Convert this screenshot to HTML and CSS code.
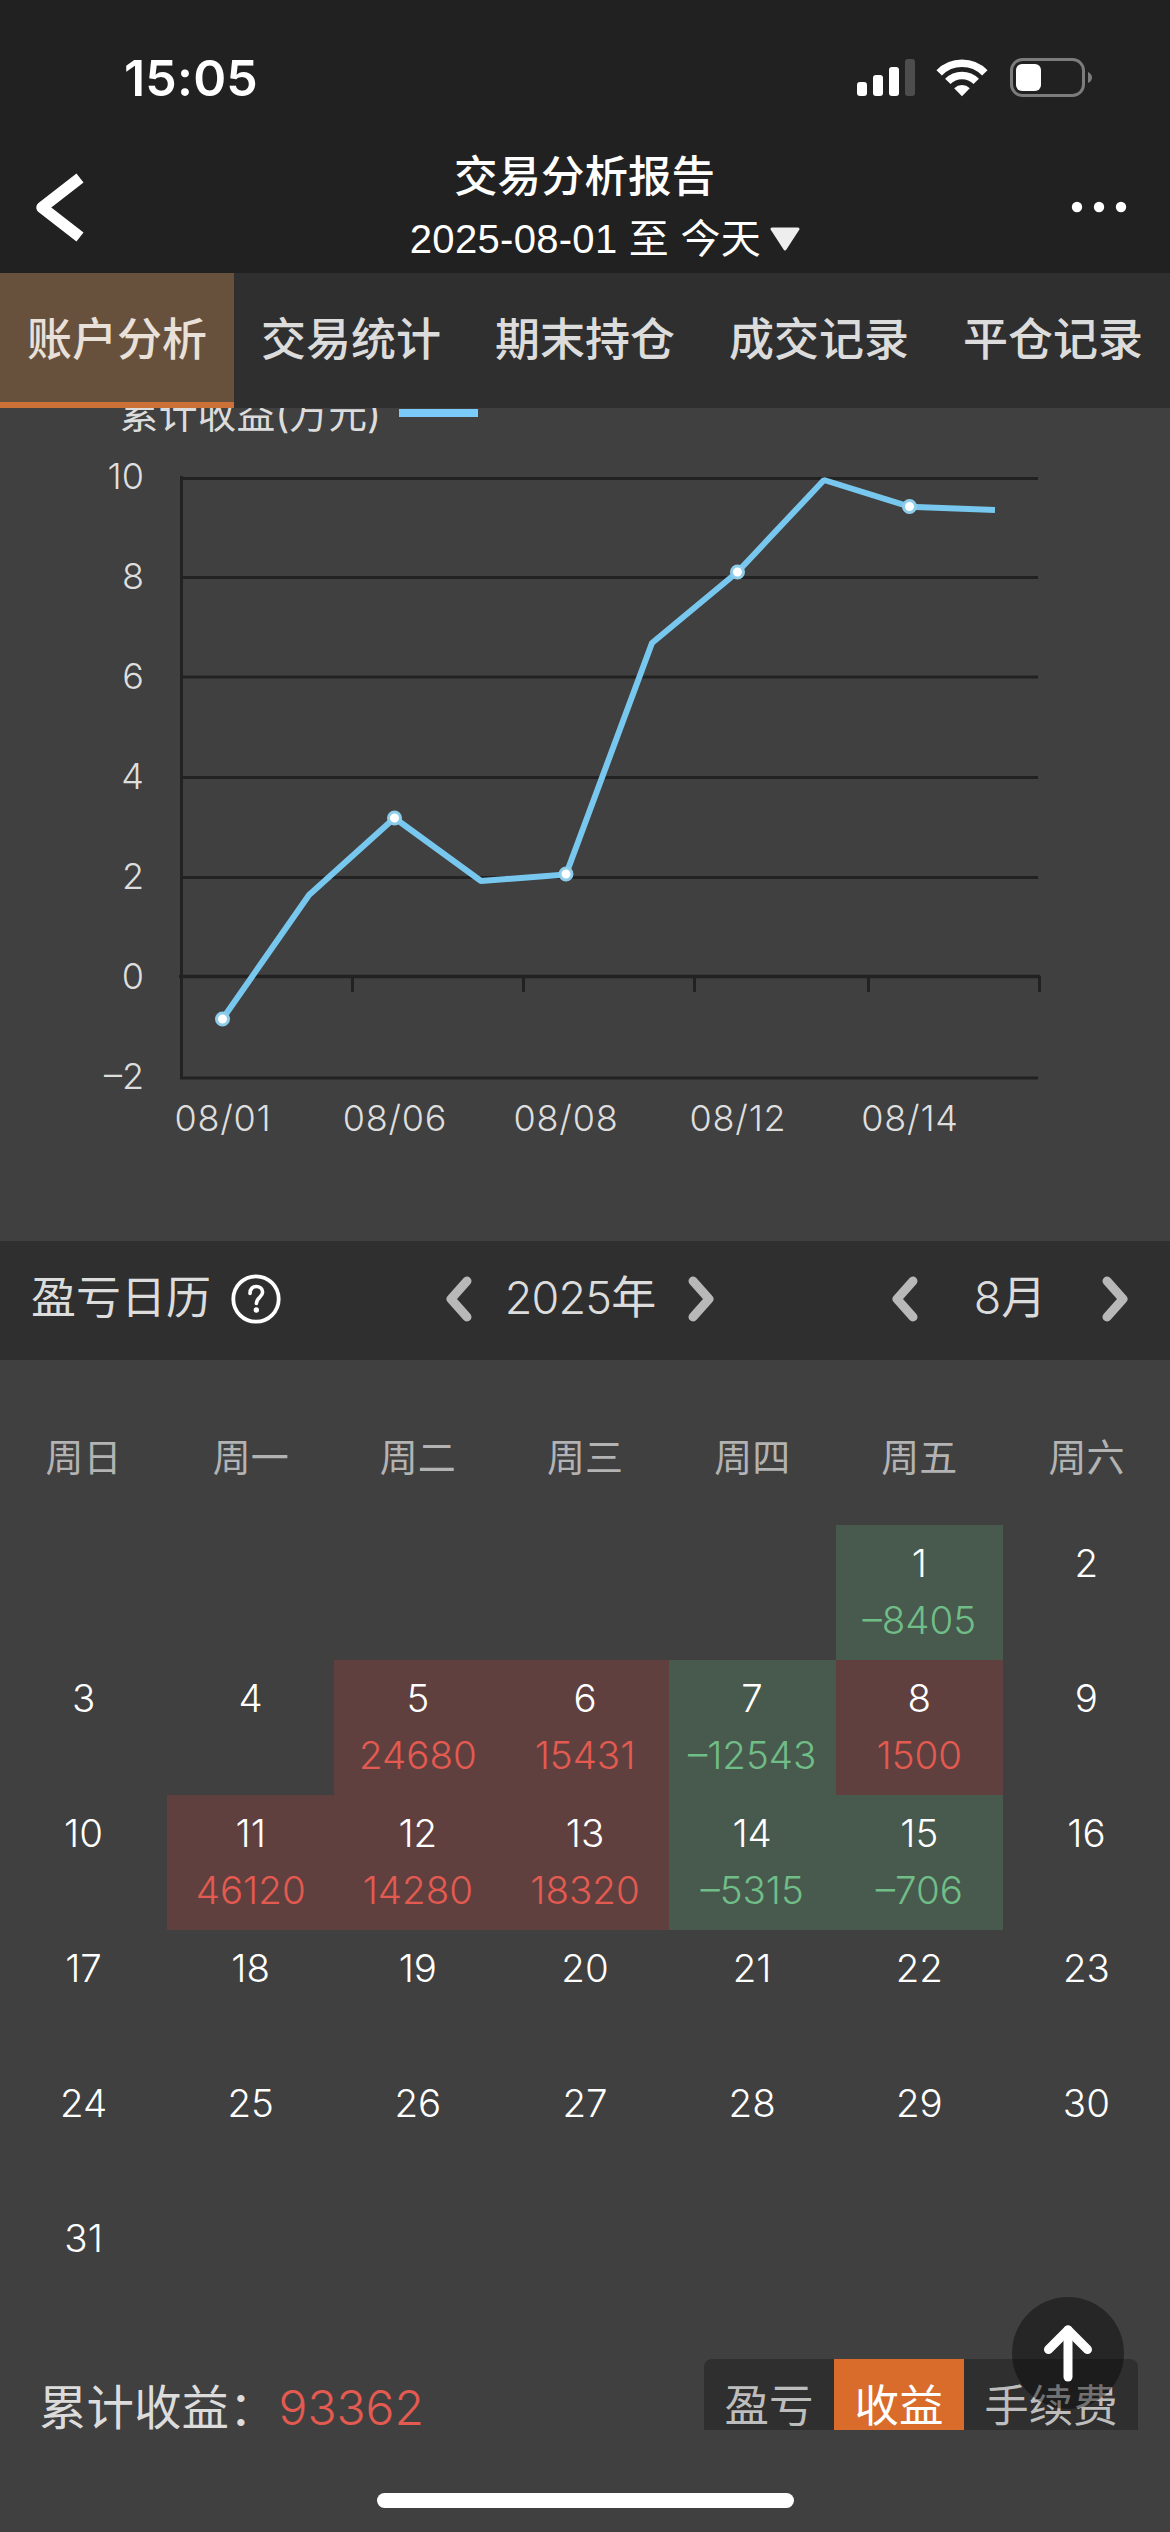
FILE: index.html
```html
<!DOCTYPE html>
<html lang="zh-CN">
<head>
<meta charset="utf-8">
<title>交易分析报告</title>
<link rel="stylesheet" href="styles.css">
</head>
<body>
<div class="screen">
  <header class="header">
    <div class="status">
      <span class="time">15:05</span>
      <div class="indicators">
        <svg width="58" height="40" viewBox="0 0 58 40"><g fill="#fff"><rect y="24" width="10" height="14" rx="3"/><rect x="16" y="17" width="10" height="21" rx="3"/><rect x="32" y="9" width="10" height="29" rx="3"/></g><rect x="48" y="1" width="10" height="37" rx="3" fill="#4d4d4d"/></svg>
        <svg class="wifi" width="52" height="40" viewBox="0 0 52 40"><g fill="none" stroke="#fff" stroke-width="7.6"><path d="M3.2 14.8A32 32 0 0 1 48.8 14.8"/><path d="M11.8 23.4A20 20 0 0 1 40.2 23.4"/></g><path d="M26 38.2L18.2 30.2A11.4 11.4 0 0 1 33.8 30.2Z" fill="#fff"/></svg>
        <svg class="battery" width="84" height="40" viewBox="0 0 84 40"><rect x="1.5" y="1.5" width="72" height="36" rx="11" fill="none" stroke="#7c7c7c" stroke-width="3"/><rect x="6" y="6" width="25" height="27" rx="6" fill="#fff"/><path d="M78 14Q82 16 82 19.500Q82 23 78 25Z" fill="#7c7c7c"/></svg>
      </div>
    </div>
    <div class="nav">
      <svg class="back" width="56" height="70" viewBox="0 0 56 70"><path d="M48 6L10 35.500L48 65" fill="none" stroke="#fff" stroke-width="11.500" stroke-linejoin="round"/></svg>
      <div class="heading">
        <h1 class="title">交易分析报告</h1>
        <div class="range"><span>2025-08-01 至 今天</span><svg width="32" height="25" viewBox="0 0 32 25"><path d="M3 2H29L16 22Z" fill="#eee" stroke="#eee" stroke-width="3" stroke-linejoin="round"/></svg></div>
      </div>
      <svg class="more" width="56" height="12" viewBox="0 0 56 12"><g fill="#fff"><circle cx="6" cy="6" r="5.200"/><circle cx="28" cy="6" r="5.200"/><circle cx="50" cy="6" r="5.200"/></g></svg>
    </div>
  </header>
  <nav class="tabs">
    <span class="tab active">账户分析</span>
    <span class="tab">交易统计</span>
    <span class="tab">期末持仓</span>
    <span class="tab">成交记录</span>
    <span class="tab">平仓记录</span>
  </nav>
  <section class="chart">
    <div class="legend"><span>累计收益(万元)</span><i class="swatch"></i></div>
    <svg class="plot" width="1170" height="750" viewBox="0 440 1170 750">
      <g stroke="#222" stroke-width="3" fill="none">
        <path d="M182 478.500H1038M182 577.500H1038M182 677H1038M182 777.500H1038M182 877.500H1038M180 1078H1038"/>
        <path d="M181.500 476V1079M352.500 978V992M523.500 978V992M694.500 978V992M868.500 978V992M1039.500 976V992"/>
        <path d="M179 976.500H1040" stroke-width="3.500"/>
      </g>
      <path d="M222.500 1019L309 895L394.500 818L481 881L566 874.500L652 643L737.500 572L824 480L909.500 506.700L995 510" fill="none" stroke="#78c7ee" stroke-width="6" stroke-linejoin="bevel"/>
      <g fill="#fff" stroke="#8dcdea" stroke-width="3"><circle cx="222.500" cy="1019" r="6"/><circle cx="394.500" cy="818" r="6"/><circle cx="566" cy="874" r="6"/><circle cx="737.500" cy="572" r="6"/><circle cx="909.500" cy="506.500" r="6"/></g>
      <g class="axis-text" text-anchor="end">
        <text x="144" y="489">10</text><text x="144" y="589">8</text><text x="144" y="689">6</text><text x="144" y="789">4</text><text x="144" y="889">2</text><text x="144" y="989">0</text><text x="144" y="1089">–2</text>
      </g>
      <g class="axis-text date" text-anchor="middle">
        <text x="223" y="1131">08/01</text><text x="395" y="1131">08/06</text><text x="566" y="1131">08/08</text><text x="738" y="1131">08/12</text><text x="910" y="1131">08/14</text>
      </g>
    </svg>
  </section>
  <section class="calendar-bar">
    <span class="bar-title">盈亏日历</span>
    <svg class="help" width="50" height="50" viewBox="0 0 50 50"><circle cx="25" cy="25" r="22.700" fill="none" stroke="#fff" stroke-width="3.800"/><path d="M19 19.500C19 14.500 22 12.500 25.200 12.500C29 12.500 31.600 15 31.600 18.300C31.600 23 25.400 23.600 25.400 29.500" fill="none" stroke="#fff" stroke-width="3.600" stroke-linecap="round"/><circle cx="25.300" cy="36" r="2.700" fill="#fff"/></svg>
    <div class="stepper year">
      <svg width="28" height="46" viewBox="0 0 28 46"><path d="M22 5L6 23L22 41"/></svg>
      <span class="step-value"><span class="num">2025</span>年</span>
      <svg width="28" height="46" viewBox="0 0 28 46"><path d="M6 5L22 23L6 41"/></svg>
    </div>
    <div class="stepper month">
      <svg width="28" height="46" viewBox="0 0 28 46"><path d="M22 5L6 23L22 41"/></svg>
      <span class="step-value"><span class="num">8</span>月</span>
      <svg width="28" height="46" viewBox="0 0 28 46"><path d="M6 5L22 23L6 41"/></svg>
    </div>
  </section>
  <div class="weekdays"><span>周日</span><span>周一</span><span>周二</span><span>周三</span><span>周四</span><span>周五</span><span>周六</span></div>
  <div class="days">
    <div class="day first loss"><b>1</b><em>–8405</em></div><div class="day"><b>2</b></div>
    <div class="day"><b>3</b></div><div class="day"><b>4</b></div><div class="day gain"><b>5</b><em>24680</em></div><div class="day gain"><b>6</b><em>15431</em></div><div class="day loss"><b>7</b><em>–12543</em></div><div class="day gain"><b>8</b><em>1500</em></div><div class="day"><b>9</b></div>
    <div class="day"><b>10</b></div><div class="day gain"><b>11</b><em>46120</em></div><div class="day gain"><b>12</b><em>14280</em></div><div class="day gain"><b>13</b><em>18320</em></div><div class="day loss"><b>14</b><em>–5315</em></div><div class="day loss"><b>15</b><em>–706</em></div><div class="day"><b>16</b></div>
    <div class="day"><b>17</b></div><div class="day"><b>18</b></div><div class="day"><b>19</b></div><div class="day"><b>20</b></div><div class="day"><b>21</b></div><div class="day"><b>22</b></div><div class="day"><b>23</b></div>
    <div class="day"><b>24</b></div><div class="day"><b>25</b></div><div class="day"><b>26</b></div><div class="day"><b>27</b></div><div class="day"><b>28</b></div><div class="day"><b>29</b></div><div class="day"><b>30</b></div>
    <div class="day"><b>31</b></div>
  </div>
  <footer class="summary">
    <div class="total"><span class="total-label">累计收益：</span><span class="total-value">93362</span></div>
    <div class="segments"><span class="segment">盈亏</span><span class="segment on">收益</span><span class="segment wide">手续费</span></div>
  </footer>
  <div class="home"><i></i></div>
  <div class="to-top"><svg width="112" height="112" viewBox="0 0 112 112"><g fill="none" stroke="#fff" stroke-width="9" stroke-linecap="round" stroke-linejoin="round"><path d="M56 33V80"/><path d="M36.500 52.500L56 33L75.500 52.500"/></g></svg></div>
</div>
</body>
</html>
```

FILE: styles.css
```css
* { box-sizing: border-box; }
body { margin: 0; background: #404040; }
svg { display: block; flex: none; }
.screen {
  position: relative;
  width: 1170px;
  height: 2532px;
  overflow: hidden;
  background: #404040;
  color: #dcdcdc;
  font-family: Inter, "Noto Sans CJK SC", sans-serif;
  display: flex;
  flex-direction: column;
}
.screen > * { flex: none; }

.header { height: 273px; background: #212121; color: #fff; }
.status { display: flex; justify-content: space-between; height: 140px; padding: 58px 76px 0 124px; }
.time { font-size: 50px; font-weight: 600; line-height: 40px; letter-spacing: .2px; }
.indicators { display: flex; }
.wifi { margin-left: 21px; }
.battery { margin-left: 22px; }
.nav { display: flex; align-items: flex-start; justify-content: space-between; padding: 0 43px 0 32px; }
.back { margin-top: 32px; }
.more { margin-top: 61px; }
.heading { display: flex; flex-direction: column; align-items: center; margin-left: 10px; }
.title { margin: 0; padding-top: 8px; font-size: 43.5px; font-weight: 500; line-height: 56px; }
.range { display: flex; align-items: center; gap: 8px; margin: 7px 0 0 42px; letter-spacing: .3px; font: 40px/56px "Liberation Sans", "Noto Sans CJK SC", sans-serif; }

.tabs { display: flex; height: 135px; background: #2f2f2f; }
.tab { flex: 1; padding-top: 4px; text-align: center; font-size: 45px; font-weight: 500; line-height: 126px; white-space: nowrap; }
.active { background: #67503c; border-bottom: 6px solid #cb7036; color: #e8e0d9; }

.chart { height: 833px; overflow: hidden; }
.legend { display: flex; align-items: center; gap: 18px; height: 52px; margin-top: -20px; padding-left: 120px; font-size: 38.8px; line-height: 52px; }
.swatch { width: 79px; height: 8px; margin-top: -2px; background: #7acbf9; }
.axis-text { font-size: 36px; font-weight: 300; fill: #dedede; }
.date { letter-spacing: .8px; }

.calendar-bar { display: flex; align-items: center; height: 119px; padding: 0 41px 3px 31px; background: #2f2f2f; font-size: 45px; line-height: 60px; }
.bar-title, .step-value { padding-bottom: 2px; }
.num { font-weight: 300; }
.help { margin-left: 20px; }
.stepper { display: flex; align-items: center; justify-content: space-between; }
.stepper svg { fill: none; stroke: #b8b8b8; stroke-width: 9px; stroke-linecap: round; stroke-linejoin: round; }
.year { width: 270px; margin-left: 164px; letter-spacing: -.8px; }
.month { width: 238px; margin-left: auto; }

.weekdays { display: grid; grid-template-columns: repeat(7, 1fr); height: 165px; padding-top: 69px; color: #b3b3b3; font-size: 38px; line-height: 56px; text-align: center; }
.days { display: grid; grid-template-columns: repeat(7, 1fr); grid-auto-rows: 135px; }
.day { display: flex; flex-direction: column; align-items: center; padding-top: 10px; font-size: 38.5px; line-height: 57px; }
.day b, .day em { font-style: normal; font-weight: 300; }
.day b { color: #fff; }
.first { grid-column: 6; }
.gain { background: #5f403f; }
.gain em { color: #e35a50; }
.loss { background: #475a4d; }
.loss em { color: #71bd88; }

.summary { display: flex; justify-content: space-between; align-items: flex-start; height: 95px; padding: 24px 32px 0 39px; }
.total { display: flex; align-items: center; padding-top: 19px; font-size: 47.5px; line-height: 60px; }
.total-value { color: #e35a50; margin-left: 2px; font-size: 48px; font-weight: 300; }
.segments { display: flex; height: 71px; border-radius: 8px 8px 0 0; overflow: hidden; background: #2f2f2f; color: #bdbdbd; font-size: 44.5px; line-height: 95px; text-align: center; }
.segment { width: 130px; }
.wide { width: 174px; }
.on { background: #d96c2b; color: #fff; }
.home { display: flex; justify-content: center; padding-top: 63px; }
.home i { width: 417px; height: 15px; border-radius: 8px; background: #fff; }
.to-top { position: absolute; left: 1012px; top: 2297px; width: 112px; height: 112px; border-radius: 50%; background: rgba(0, 0, 0, .4); }
```
